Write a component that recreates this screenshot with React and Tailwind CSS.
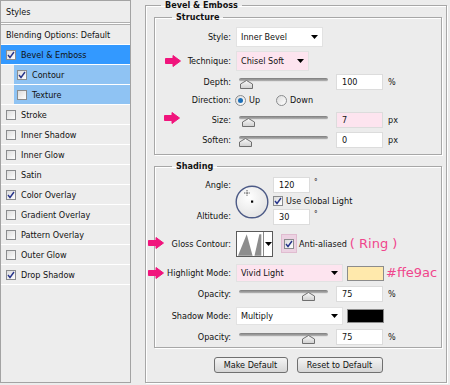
import React from 'react';

const styleRows = [
  { label: 'Bevel & Emboss', checked: true, active: true },
  { label: 'Contour', checked: true, sub: true },
  { label: 'Texture', sub: true },
  { label: 'Stroke' },
  { label: 'Inner Shadow' },
  { label: 'Inner Glow' },
  { label: 'Satin' },
  { label: 'Color Overlay', checked: true },
  { label: 'Gradient Overlay' },
  { label: 'Pattern Overlay' },
  { label: 'Outer Glow' },
  { label: 'Drop Shadow', checked: true },
];

function Check({ checked }) {
  return (
    <span className="w-[10px] h-[10px] shrink-0 border border-[#8a8c8e] bg-gradient-to-br from-[#dcdcdc] to-white flex items-center justify-center">
      {checked && (
        <svg width="8" height="8" viewBox="0 0 8 8">
          <path d="M1 4 L3 6.5 L7 1" fill="none" stroke="#26338a" strokeWidth="1.4" />
        </svg>
      )}
    </span>
  );
}

function Radio({ on }) {
  return (
    <span className="w-[11px] h-[11px] shrink-0 rounded-full border border-[#8a8c8e] bg-gradient-to-br from-[#dcdcdc] to-white flex items-center justify-center">
      {on && <span className="w-[5px] h-[5px] rounded-full bg-[#1c6fb8]" />}
    </span>
  );
}

function Arrow({ className }) {
  // pink annotation arrow lying over the dialog
  return (
    <svg className={`absolute ${className}`} width="16" height="12" viewBox="0 0 16 12">
      <path d="M0.5 3.5 L8 3.5 L8 0.5 L15.5 6 L8 11.5 L8 8.5 L0.5 8.5 Z" fill="#f0147c" strokeLinejoin="round" stroke="#f0147c" />
    </svg>
  );
}

function DropArrow() {
  return (
    <svg width="7" height="4" viewBox="0 0 7 4">
      <path d="M0 0 L7 0 L3.5 4 Z" fill="#000" />
    </svg>
  );
}

function Select({ value, w, pink }) {
  return (
    <div className={`${w} h-full flex items-center justify-between pl-[4px] pr-[4px] border border-[#e2e2e2] ${pink ? 'bg-[#fde4ef]' : 'bg-white'}`}>
      <span>{value}</span>
      <DropArrow />
    </div>
  );
}

function Slider({ at }) {
  return (
    <div className="relative ml-[3px] w-[89px] h-full">
      <div className="mt-[4px] h-[4px] rounded-full bg-gradient-to-b from-[#7c7c7c] to-[#b4b4b4] border-b border-[#e0e0e0]" />
      <svg className="absolute top-[6px]" style={{ left: at }} width="13" height="9" viewBox="0 0 13 9">
        <defs>
          <linearGradient id="thumb" x1="0" y1="0" x2="0" y2="1">
            <stop offset="0" stopColor="#fafafa" />
            <stop offset="1" stopColor="#cfcfcf" />
          </linearGradient>
        </defs>
        <path d="M0.5 8.5 L0.5 4 L6.5 0.5 L12.5 4 L12.5 8.5 Z" fill="url(#thumb)" stroke="#6f6f6f" />
      </svg>
    </div>
  );
}

function Field({ value, pink, w = 'w-[47px]', ml = 'ml-[8px]' }) {
  return (
    <div className={`${ml} ${w} h-full flex items-center pl-[5px] border border-[#dcdcdc] ${pink ? 'bg-[#fde4ef]' : 'bg-white'}`}>
      {value}
    </div>
  );
}

function Label({ children }) {
  return <div className="w-[76px] shrink-0 text-right">{children}</div>;
}

function SliderRow({ label, at, value, unit, pink, className, arrow }) {
  return (
    <div className={`relative flex items-center h-[16px] ${className}`}>
      {arrow}
      <Label>{label}</Label>
      <div className="ml-[5px] flex items-center h-full">
        <Slider at={at} />
        <Field value={value} pink={pink} />
        <span className="ml-[5px]">{unit}</span>
      </div>
    </div>
  );
}

function Button({ children, w }) {
  return (
    <button className={`${w} h-[16px] rounded-[3px] border border-[#707070] bg-gradient-to-b from-[#f4f4f4] to-[#d6d6d6] flex items-center justify-center leading-none`}>
      {children}
    </button>
  );
}

export default function App() {
  return (
    <div className="w-[450px] h-[385px] bg-[#ececec] text-[9px] leading-[12px] text-[#111] font-['DejaVu_Sans_Condensed','Liberation_Sans',sans-serif] flex items-start overflow-hidden">
      {/* Styles list */}
      <div className="w-[131px] h-[383px] shrink-0 border border-[#a3a3a3] bg-[#ededed] flex flex-col">
        <div className="h-[21px] flex items-center pl-[5px]">Styles</div>
        <div className="h-[3px] border-y border-[#b0b0b0] bg-white" />
        <div className="h-[19px] flex items-center pl-[5px]">Blending Options: Default</div>
        {styleRows.map((r) => (
          <div key={r.label} className="h-[20px] border-t border-white flex">
            <div
              className={`flex-1 flex items-center gap-[5px] ${r.sub ? 'ml-[13px] pl-[3px] bg-[#8fc3f3]' : 'pl-[5px]'} ${r.active ? 'bg-[#3399ff]' : ''}`}
            >
              <Check checked={r.checked} />
              <span>{r.label}</span>
            </div>
          </div>
        ))}
        <div className="border-t border-white" />
      </div>

      {/* Bevel & Emboss */}
      <fieldset className="ml-[14px] mt-[-1px] w-[302px] h-[384px] shrink-0 border border-[#a7a7a7] shadow-[inset_1px_1px_0_#fff,1px_1px_0_#fff] pl-[8px] pr-[4px] flex flex-col">
        <legend className="ml-[7px] px-[4px] font-bold leading-[12px]">Bevel &amp; Emboss</legend>

        <fieldset className="border border-[#a7a7a7] shadow-[inset_1px_1px_0_#fff,1px_1px_0_#fff] pt-[4px] pb-[6px]">
          <legend className="ml-[17px] px-[4px] font-bold leading-[12px]">Structure</legend>
          <div className="flex items-center h-[20px]">
            <Label>Style:</Label>
            <div className="ml-[5px] h-full flex">
              <Select value="Inner Bevel" w="w-[87px]" />
            </div>
          </div>
          <div className="relative flex items-center h-[20px] mt-[4px]">
            <Arrow className="left-[10px] top-[4px]" />
            <Label>Technique:</Label>
            <div className="ml-[5px] h-full flex">
              <Select value="Chisel Soft" w="w-[73px]" pink />
            </div>
          </div>
          <SliderRow label="Depth:" at={1} value="100" unit="%" className="mt-[3px]" />
          <div className="flex items-center h-[16px] mt-[2px]">
            <Label>Direction:</Label>
            <div className="ml-[4px] flex items-center">
              <Radio on />
              <span className="ml-[3px]">Up</span>
              <span className="ml-[16px]"><Radio /></span>
              <span className="ml-[3px]">Down</span>
            </div>
          </div>
          <SliderRow
            label="Size:"
            at={3}
            value="7"
            unit="px"
            pink
            className="mt-[4px]"
            arrow={<Arrow className="left-[9px] top-[0px]" />}
          />
          <SliderRow label="Soften:" at={0} value="0" unit="px" className="mt-[4px]" />
        </fieldset>

        <fieldset className="mt-[5px] border border-[#a7a7a7] shadow-[inset_1px_1px_0_#fff,1px_1px_0_#fff] pb-[2px]">
          <legend className="ml-[17px] px-[4px] font-bold leading-[12px]">Shading</legend>

          <div className="flex mt-[5px]">
            <div className="flex flex-col">
              <div className="h-[16px] flex items-center"><Label>Angle:</Label></div>
              <div className="h-[16px] mt-[15px] flex items-center"><Label>Altitude:</Label></div>
            </div>
            <svg className="ml-[4px] mt-[8px] shrink-0" width="34" height="34" viewBox="0 0 34 34">
              <defs>
                <radialGradient id="dial" cx="0.4" cy="0.35" r="0.7">
                  <stop offset="0" stopColor="#ffffff" />
                  <stop offset="1" stopColor="#e2e2e2" />
                </radialGradient>
              </defs>
              <circle cx="17" cy="17" r="15.8" fill="url(#dial)" stroke="#4c5a86" strokeWidth="1.4" />
              <path d="M12 5 V11 M9 8 H15" stroke="#333" strokeWidth="0.8" strokeDasharray="1 0.6" />
              <rect x="16" y="15.5" width="2.2" height="2.2" fill="#000" />
            </svg>
            <div className="ml-[4px] flex flex-col">
              <div className="h-[16px] flex items-center">
                <Field value="120" w="w-[37px]" ml="ml-0" />
                <span className="ml-[4px] self-start mt-[1px] text-[8px] leading-[10px]">°</span>
              </div>
              <div className="h-[12px] mt-[2px] flex items-center">
                <Check checked />
                <span className="ml-[3px]">Use Global Light</span>
              </div>
              <div className="h-[16px] mt-[2px] flex items-center">
                <Field value="30" w="w-[37px]" ml="ml-0" />
                <span className="ml-[4px] self-start mt-[1px] text-[8px] leading-[10px]">°</span>
              </div>
            </div>
          </div>

          <div className="relative flex items-center h-[27px] mt-[5px]">
            <Arrow className="left-[-7px] top-[7px]" />
            <Label>Gloss Contour:</Label>
            <div className="ml-[5px] w-[37px] h-[26px] border border-[#5a5a5a] bg-white flex">
              <svg className="mt-[2px] ml-[1px]" width="26" height="22" viewBox="0 0 26 22">
                <path d="M0 22 L9 0 L15 22 Z" fill="#8d8d8d" />
                <path d="M17 22 L22 0 L24 0 L24 22 Z" fill="#8d8d8d" />
              </svg>
              <div className="ml-auto w-[9px] border-l border-[#8a8a8a] flex items-center justify-center">
                <DropArrow />
              </div>
            </div>
            <div className="ml-[8px] w-[16px] h-[19px] bg-[#ecd2e2] border border-[#e0bcd0] flex items-center justify-center">
              <Check checked />
            </div>
            <span className="ml-[2px]">Anti-aliased</span>
            <span className="ml-[3px] text-[13px] leading-[16px] text-[#f0468c] font-['DejaVu_Sans',sans-serif]">( Ring )</span>
          </div>

          <div className="relative flex items-center h-[18px] mt-[7px]">
            <Arrow className="left-[-7px] top-[3px]" />
            <Label>Highlight Mode:</Label>
            <div className="ml-[5px] h-full flex">
              <Select value="Vivid Light" w="w-[107px]" pink />
            </div>
            <div className="ml-[4px] w-[37px] h-[15px] bg-[#ffe9ac] border border-[#8c8c8c]" />
            <span className="ml-[2px] text-[13px] leading-[16px] text-[#f0468c] font-['DejaVu_Sans',sans-serif]">#ffe9ac</span>
          </div>

          <SliderRow label="Opacity:" at={63} value="75" unit="%" className="mt-[4px]" />

          <div className="flex items-center h-[18px] mt-[5px]">
            <Label>Shadow Mode:</Label>
            <div className="ml-[5px] h-full flex">
              <Select value="Multiply" w="w-[107px]" />
            </div>
            <div className="ml-[4px] w-[37px] h-[14px] bg-black border border-[#8c8c8c]" />
          </div>

          <SliderRow label="Opacity:" at={63} value="75" unit="%" className="mt-[4px]" />
        </fieldset>

        <div className="mt-[9px] flex justify-center gap-[9px]">
          <Button w="w-[74px]">Make Default</Button>
          <Button w="w-[86px]">Reset to Default</Button>
        </div>
      </fieldset>
    </div>
  );
}
